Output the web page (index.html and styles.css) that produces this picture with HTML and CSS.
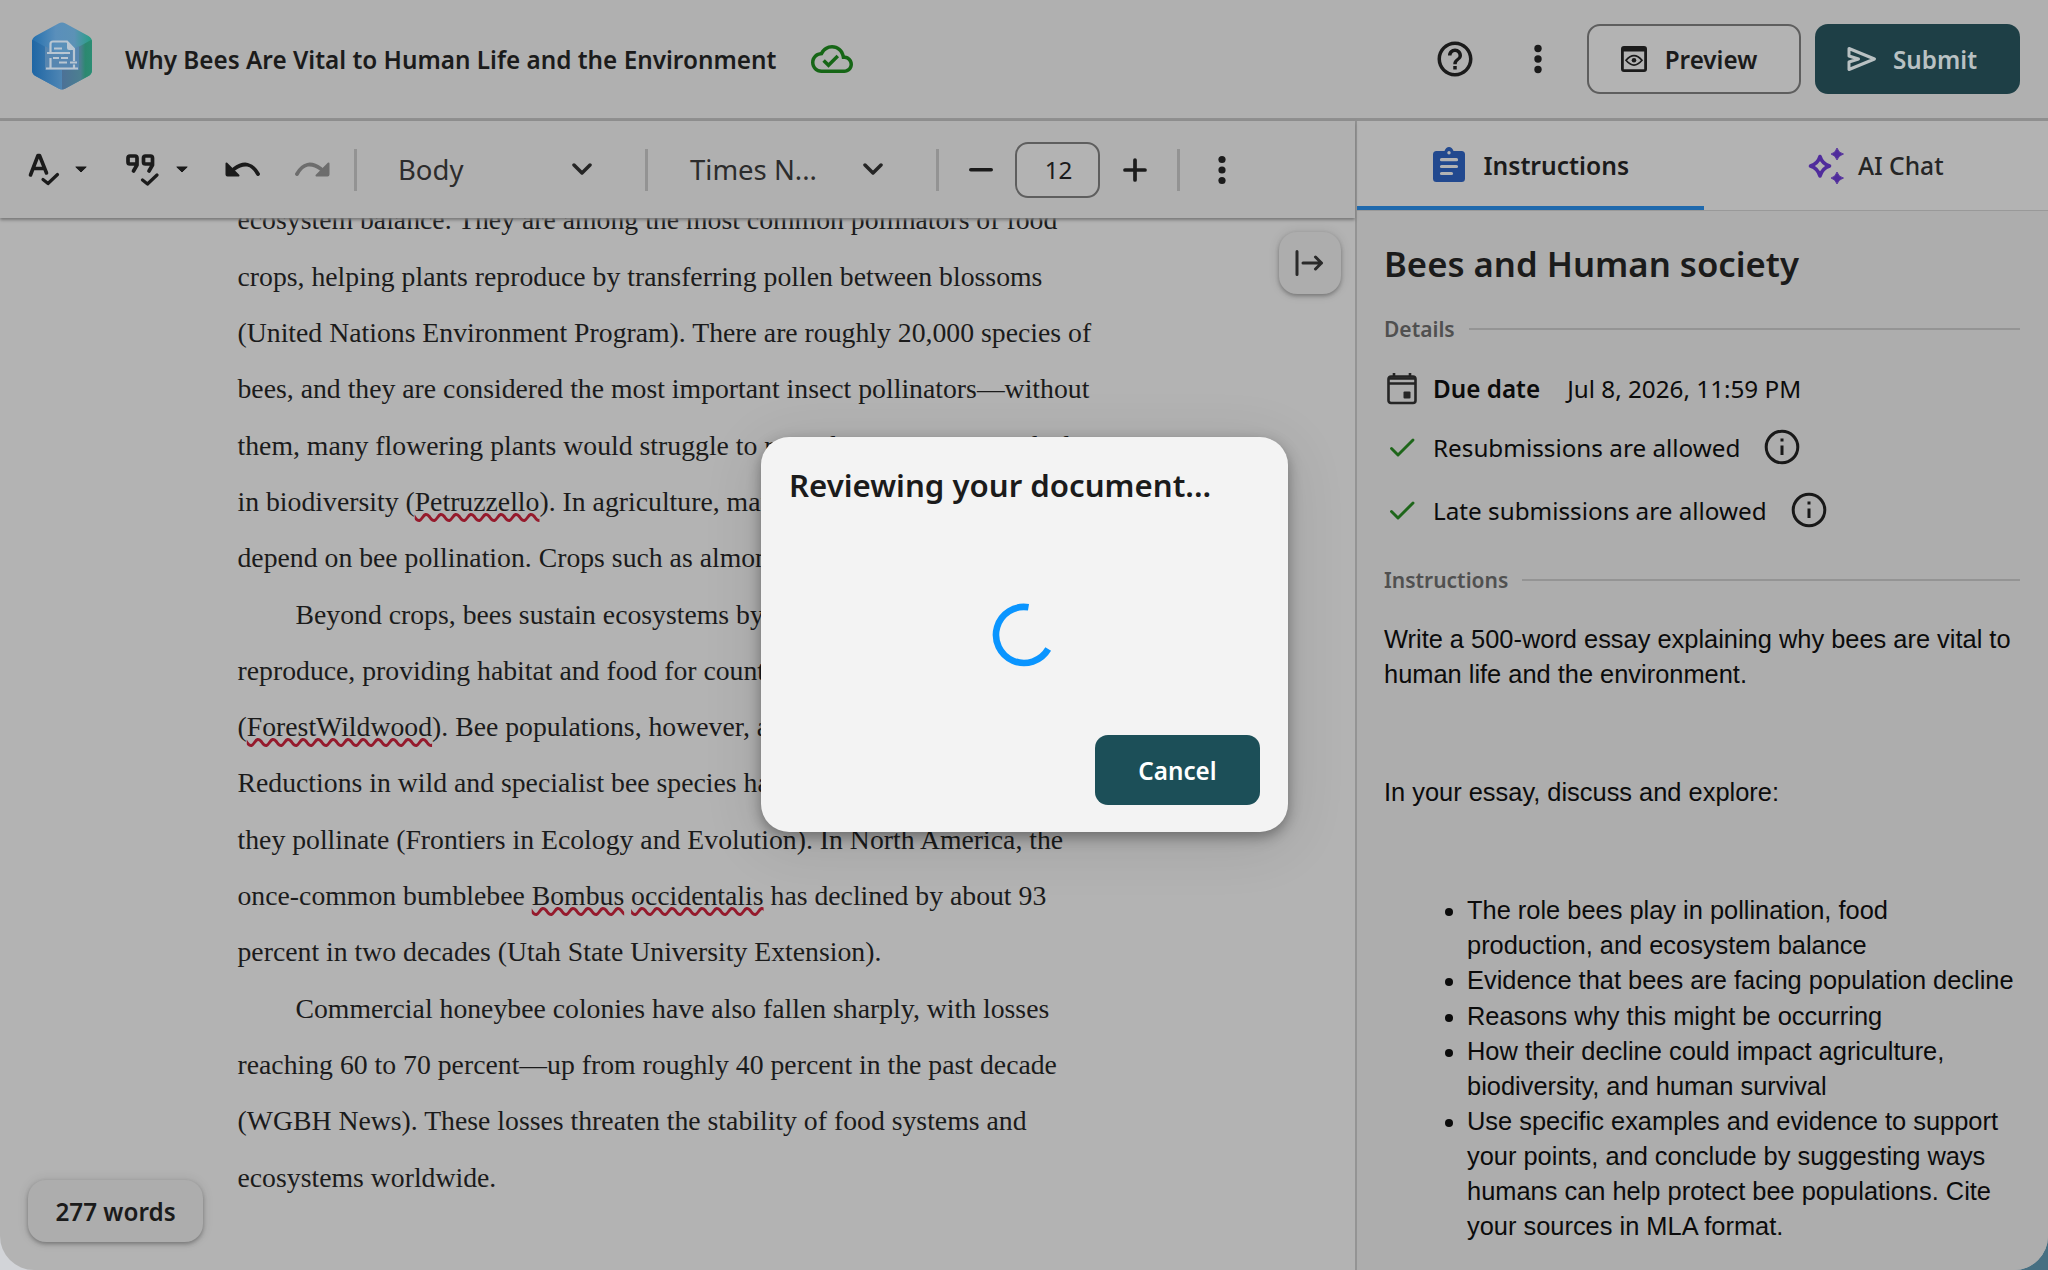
FILE: index.html
```html
<!DOCTYPE html>
<html lang="en">
<head>
<meta charset="utf-8">
<title>Why Bees Are Vital to Human Life and the Environment</title>
<link rel="stylesheet" href="styles.css">
</head>
<body>
<div class="app">
  <header class="header">
    <svg class="logo" width="62" height="68" viewBox="0 0 62 68">
      <defs>
        <clipPath id="hex"><path d="M27.500 1.500Q31 -.5 34.500 1.500L57.500 14Q61 16 61 20V48Q61 52 57.500 54L34.500 66.500Q31 68.500 27.500 66.500L4.500 54Q1 52 1 48V20Q1 16 4.500 14Z"/></clipPath>
        <linearGradient id="lg-left" x1="0" x2="1"><stop offset="0" stop-color="#1d65a4"/><stop offset="1" stop-color="#4f86b4"/></linearGradient>
        <linearGradient id="lg-top" x1="0" x2="1"><stop offset="0" stop-color="#226fae"/><stop offset=".4" stop-color="#5a8fbb"/><stop offset=".7" stop-color="#5c92b6"/><stop offset="1" stop-color="#22a080"/></linearGradient>
        <linearGradient id="lg-right" x1="0" x2="1"><stop offset="0" stop-color="#4c7197"/><stop offset=".6" stop-color="#4c7f90"/><stop offset=".75" stop-color="#2c8870"/><stop offset="1" stop-color="#2b8d74"/></linearGradient>
      </defs>
      <g clip-path="url(#hex)">
        <rect width="62" height="68" fill="url(#lg-top)"/>
        <path d="M0 17L31 34V68H0Z" fill="url(#lg-left)"/>
        <path d="M62 17L31 34V68H62Z" fill="url(#lg-right)"/>
        <path d="M14 24L31 34L48 24V48H14Z" fill="#5786b0"/>
      </g>
      <g fill="none" stroke="#b9c6d2" stroke-width="2.200">
        <path d="M19.500 30V22Q19.500 19.500 22 19.500H36L43 27V39M19.500 36V46M43 42.500V46"/>
        <path d="M15 46.500H47M16 31H39M28 40.500H36M39 40.500H46M23 26.500H31M22 36H28M30 36H37M32 31H37"/>
      </g>
      <path d="M36 19L43.500 28H38Q36 28 36 26Z" fill="#b9c6d2"/>
    </svg>
    <h1 class="doc-title">Why Bees Are Vital to Human Life and the Environment</h1>
    <svg class="cloud" width="42" height="42" viewBox="0 0 24 24" fill="#166616"><path d="M19.350 10.040C18.670 6.590 15.640 4 12 4 9.110 4 6.600 5.640 5.350 8.040 2.340 8.360 0 10.910 0 14c0 3.310 2.690 6 6 6h13c2.760 0 5-2.240 5-5 0-2.640-2.050-4.780-4.650-4.960zM19 18H6c-2.210 0-4-1.790-4-4 0-2.050 1.530-3.760 3.560-3.970l1.070-.11.5-.95C8.080 7.140 9.940 6 12 6c2.620 0 4.880 1.860 5.390 4.430l.3 1.500 1.530.11c1.560.1 2.780 1.410 2.780 2.960 0 1.650-1.350 3-3 3zm-9-3.820-2.090-2.090L6.500 13.500 10 17l6.010-6.010-1.410-1.410z"/></svg>
    <div class="header-actions">
      <svg class="icon help" width="42" height="42" viewBox="0 0 24 24"><path d="M11 18h2v-2h-2v2zm1-16C6.480 2 2 6.480 2 12s4.480 10 10 10 10-4.480 10-10S17.520 2 12 2zm0 18c-4.410 0-8-3.590-8-8s3.590-8 8-8 8 3.590 8 8-3.590 8-8 8zm0-14c-2.210 0-4 1.790-4 4h2c0-1.100.9-2 2-2s2 .9 2 2c0 2-3 1.750-3 5h2c0-2.250 3-2.500 3-5 0-2.210-1.790-4-4-4z"/></svg>
      <svg class="icon more" width="10" height="30" viewBox="0 0 10 30"><circle cx="5" cy="4.500" r="3.700"/><circle cx="5" cy="15" r="3.700"/><circle cx="5" cy="25.500" r="3.700"/></svg>
      <button class="btn btn-outline"><svg width="26" height="26" viewBox="0 0 26 26"><path d="M3 0H23Q26 0 26 3V23Q26 26 23 26H3Q0 26 0 23V3Q0 0 3 0ZM2.800 5.500V23.200H23.200V5.500Z" fill="#1b1b1b" fill-rule="evenodd"/><path d="M5 14.300Q13 4.800 21 14.300Q13 23.800 5 14.300Z" fill="none" stroke="#1b1b1b" stroke-width="1.700"/><circle cx="13" cy="14.300" r="2.300" fill="#1b1b1b"/></svg><span>Preview</span></button>
      <button class="btn btn-dark"><svg width="30" height="26" viewBox="0 0 30 26" fill="none" stroke="#b9c1c3" stroke-width="3" stroke-linejoin="round"><path d="M2 2.500L27.500 13L2 23.500V16L11.500 13L2 10Z"/></svg><span>Submit</span></button>
    </div>
  </header>
  <div class="body">
    <main class="main">
      <div class="toolbar">
        <svg class="icon spell" width="32" height="34" viewBox="0 0 32 34" fill="none" stroke="#1b1b1b" stroke-width="3.600" stroke-linecap="round" stroke-linejoin="round"><path d="M2.500 22L10 2.500H11.500L18.500 20M5.500 15.500H15.500"/><path d="M15 26.500L20 30.500L29.500 21.500" stroke-width="3.200"/></svg>
        <svg class="caret" width="12" height="7" viewBox="0 0 12 7"><path d="M.8 1H11.200L6 6Z" fill="#1b1b1b" stroke="#1b1b1b" stroke-linejoin="round"/></svg>
        <svg class="icon quote" width="34" height="34" viewBox="0 0 34 34" fill="none" stroke="#1b1b1b" stroke-width="3.700" stroke-linecap="round" stroke-linejoin="round"><path d="M12 11H5Q3 11 3 9V5Q3 3 5 3H10Q12 3 12 5V12L8.500 18M27.500 11H20.500Q18.500 11 18.500 9V5Q18.500 3 20.500 3H25.500Q27.500 3 27.500 5V12L24 18"/><path d="M17.500 27L22.500 31L32 22" stroke-width="3.200"/></svg>
        <svg class="caret caret-two" width="12" height="7" viewBox="0 0 12 7"><path d="M.8 1H11.200L6 6Z" fill="#1b1b1b" stroke="#1b1b1b" stroke-linejoin="round"/></svg>
        <svg class="undo" width="36" height="16" viewBox="0 0 36 16"><path d="M9 7Q24-4 33 12" fill="none" stroke="#1b1b1b" stroke-width="3.800" stroke-linecap="round"/><path d="M1.500 1.500L13.500 13.500H2.500Q1.500 13.500 1.500 12.500Z" fill="#1b1b1b" stroke="#1b1b1b" stroke-width="2" stroke-linejoin="round"/></svg>
        <svg class="redo" width="36" height="16" viewBox="0 0 36 16"><path d="M27 7Q12-4 3 12" fill="none" stroke="#6d6d6d" stroke-width="3.800" stroke-linecap="round"/><path d="M34.500 1.500L22.500 13.500H33.500Q34.500 13.500 34.500 12.500Z" fill="#6d6d6d" stroke="#6d6d6d" stroke-width="2" stroke-linejoin="round"/></svg>
        <i class="divider d1"></i>
        <div class="select style-select"><span>Body</span><svg width="20" height="13" viewBox="0 0 20 13"><path d="M2 2L10 10L18 2"/></svg></div>
        <i class="divider"></i>
        <div class="select font-select"><span>Times N...</span><svg width="20" height="13" viewBox="0 0 20 13"><path d="M2 2L10 10L18 2"/></svg></div>
        <i class="divider"></i>
        <svg class="minus" width="24" height="4" viewBox="0 0 24 4"><rect width="24" height="3.600" rx="1.800" fill="#1b1b1b"/></svg>
        <div class="size-box">12</div>
        <svg class="plus" width="24" height="24" viewBox="0 0 24 24"><path d="M12 2V22M2 12H22" stroke="#1b1b1b" stroke-width="3.700" stroke-linecap="round"/></svg>
        <i class="divider d4"></i>
        <svg class="icon more-two" width="10" height="30" viewBox="0 0 10 30"><circle cx="5" cy="4.500" r="3.600"/><circle cx="5" cy="15" r="3.600"/><circle cx="5" cy="25.500" r="3.600"/></svg>
      </div>
      <div class="editor">
        <article class="document">
          <p>ecosystem balance. They are among the most common pollinators of food<br>crops, helping plants reproduce by transferring pollen between blossoms<br>(United Nations Environment Program). There are roughly 20,000 species of<br>bees, and they are considered the most important insect pollinators—without<br>them, many flowering plants would struggle to reproduce, triggering a decline<br>in biodiversity (<span class="misspelt">Petruzzello</span>). In agriculture, many<br>depend on bee pollination. Crops such as almonds</p>
          <p class="indent">Beyond crops, bees sustain ecosystems by<br>reproduce, providing habitat and food for countless<br>(<span class="misspelt">ForestWildwood</span>). Bee populations, however, are<br>Reductions in wild and specialist bee species have<br>they pollinate (Frontiers in Ecology and Evolution). In North America, the<br>once-common bumblebee <span class="misspelt">Bombus</span> <span class="misspelt">occidentalis</span> has declined by about 93<br>percent in two decades (Utah State University Extension).</p>
          <p class="indent">Commercial honeybee colonies have also fallen sharply, with losses<br>reaching 60 to 70 percent—up from roughly 40 percent in the past decade<br>(WGBH News). These losses threaten the stability of food systems and<br>ecosystems worldwide.</p>
        </article>
        <button class="collapse"><svg width="30" height="28" viewBox="0 0 30 28" fill="none" stroke="#2a2a2a" stroke-width="3" stroke-linecap="round" stroke-linejoin="round"><path d="M3 2.500V25.500M9 14H27.500M21.500 8L27.500 14L21.500 20"/></svg></button>
        <div class="word-count">277 words</div>
      </div>
    </main>
    <aside class="sidebar">
      <nav class="tabs">
        <div class="tab active"><svg width="32" height="35" viewBox="0 0 32 35"><path d="M3.500 4H11.500Q13 0 16 0Q19 0 20.500 4H28.500Q32 4 32 7.500V31.500Q32 35 28.500 35H3.500Q0 35 0 31.500V7.500Q0 4 3.500 4Z" fill="#22498f"/><circle cx="16" cy="5.800" r="1.700" fill="#b3b3b3"/><path d="M8.500 12.700H23.500M8.500 19.500H23.500M8.500 26.500H18.500" stroke="#b3b3b3" stroke-width="3.200" stroke-linecap="round"/></svg><span>Instructions</span></div>
        <div class="tab"><svg width="36" height="36" viewBox="0 0 36 36"><path d="M12 8.500Q14 15.500 21.500 18Q14 20.500 12 28Q10 20.500 2.500 18Q10 15.500 12 8.500Z" fill="none" stroke="#502c9c" stroke-width="3.600" stroke-linejoin="round"/><path d="M29 0Q30.500 5 35.500 6Q30.500 7.500 29 12Q27.500 7.500 23 6Q27.500 5 29 0ZM29 24Q30.500 29 35.500 30Q30.500 31.500 29 36Q27.500 31.500 23 30Q27.500 29 29 24Z" fill="#502c9c" stroke="#502c9c" stroke-width=".8"/></svg><span>AI Chat</span></div>
      </nav>
      <section class="panel">
        <h2>Bees and Human society</h2>
        <div class="section-label">Details</div>
        <div class="detail due"><svg width="30" height="33" viewBox="0 0 30 33" fill="none" stroke="#252525" stroke-width="2.600"><rect x="1.500" y="4.500" width="27" height="26.500" rx="2.500"/><path d="M2 11.500H28M2 6.500H28M7 1V5M23 1V5"/><rect x="16.500" y="19.500" width="7" height="7" rx="1" fill="#252525" stroke="none"/></svg><b>Due date</b><span>Jul 8, 2026, 11:59 PM</span></div>
        <div class="detail resub"><svg class="check" width="30" height="22" viewBox="0 0 30 22"><path d="M4.500 12.500L11 19L26 4"/></svg><span>Resubmissions are allowed</span><svg class="info" width="36" height="36" viewBox="0 0 36 36"><circle cx="18" cy="18" r="15.800"/><path d="M18 16.500V26M18 9.500V12.500"/></svg></div>
        <div class="detail late"><svg class="check" width="30" height="22" viewBox="0 0 30 22"><path d="M4.500 12.500L11 19L26 4"/></svg><span>Late submissions are allowed</span><svg class="info" width="36" height="36" viewBox="0 0 36 36"><circle cx="18" cy="18" r="15.800"/><path d="M18 16.500V26M18 9.500V12.500"/></svg></div>
        <div class="section-label">Instructions</div>
        <div class="brief">
          <p>Write a 500-word essay explaining why bees are vital to<br>human life and the environment.</p>
          <p class="discuss">In your essay, discuss and explore:</p>
          <ul>
            <li>The role bees play in pollination, food<br>production, and ecosystem balance</li>
            <li>Evidence that bees are facing population decline</li>
            <li>Reasons why this might be occurring</li>
            <li>How their decline could impact agriculture,<br>biodiversity, and human survival</li>
            <li>Use specific examples and evidence to support<br>your points, and conclude by suggesting ways<br>humans can help protect bee populations. Cite<br>your sources in MLA format.</li>
          </ul>
        </div>
      </section>
    </aside>
  </div>
</div>
<div class="dialog" role="dialog">
  <h2>Reviewing your document...</h2>
  <div class="spinner-wrap"><svg width="64" height="64" viewBox="0 0 64 64"><path d="M36.500 4.300A28 28 0 1 0 56.200 46" fill="none" stroke="#0a95ff" stroke-width="6.600"/></svg></div>
  <button class="btn cancel">Cancel</button>
</div>
</body>
</html>
```

FILE: styles.css
```css
* { box-sizing: border-box; }
body { margin: 0; width: 2048px; height: 1270px; overflow: hidden; position: relative; font-family: "Noto Sans", "Open Sans", sans-serif; font-size: 24.25px; color: #1b1b1b; background: linear-gradient(90deg, #d2d4d8 50%, #466f82 50%); }
h1, h2, p, ul { margin: 0; }
svg { display: block; flex: none; }
button { font: inherit; color: inherit; border: 0; padding: 0; }
.app { height: 1270px; display: flex; flex-direction: column; overflow: hidden; background: #b3b3b3; border-radius: 0 0 34px 34px; }

.header { height: 121px; flex: none; display: flex; align-items: center; padding: 0 28px 0 31px; background: #b0b0b0; border-bottom: 3px solid #8f8f8f; }
.logo { margin: -7px 32px 0 0; }
.doc-title { font-size: 24.3px; font-weight: 600; line-height: 32px; padding-top: 1px; white-space: nowrap; }
.cloud { margin-left: 35px; }
.header-actions { margin-left: auto; display: flex; align-items: center; }
.icon { fill: #1b1b1b; }
.help { margin-right: 57px; }
.more { margin-right: 44px; }
.btn { height: 70px; border-radius: 13px; display: flex; align-items: center; justify-content: center; font-weight: 600; }
.btn-outline { width: 214px; background: #b3b3b3; border: 2px solid #5e5e5e; gap: 18px; margin-right: 14px; padding: 0 10px 0 0; }
.btn-dark { width: 205px; background: #1e3f46; color: #b9c1c3; gap: 16px; padding: 0 11px 0 0; }

.body { flex: 1; display: flex; min-height: 0; }
.main { width: 1355px; flex: none; display: flex; flex-direction: column; }
.toolbar { height: 97px; flex: none; display: flex; align-items: center; padding-left: 28px; background: #b0b0b0; box-shadow: 0 2px 3px #777; z-index: 1; }
.spell, .quote { fill: none; }
.caret { margin-left: 15px; }
.quote { margin-left: 38px; }
.caret-two { margin-left: 17px; }
.undo { margin-left: 37px; }
.redo { margin-left: 33px; }
.divider { width: 3px; height: 42px; background: #939393; flex: none; }
.d1 { margin-left: 24px; }
.select { height: 44px; display: flex; align-items: center; justify-content: space-between; font-size: 27.5px; color: #2c2c2c; white-space: nowrap; }
.select svg { fill: none; stroke: #252525; stroke-width: 3.500; stroke-linecap: round; stroke-linejoin: round; }
.style-select { width: 288px; padding: 0 53px 0 41px; }
.font-select { width: 288px; padding: 0 53px 0 42px; }
.minus { margin-left: 30px; }
.size-box { width: 85px; height: 56px; margin: 0 23px 0 22px; border: 2px solid #5e5e5e; border-radius: 13px; background: #b3b3b3; display: flex; align-items: center; justify-content: center; padding-left: 2px; }
.d4 { margin-left: 30px; }
.more-two { margin-left: 37px; }

.editor { flex: 1; min-height: 0; position: relative; overflow: hidden; }
.document { padding-left: 237.500px; margin-top: -25.700px; font: 27.740px/56.320px "Liberation Serif", "Times New Roman", serif; white-space: nowrap; }
.indent { text-indent: 58px; }
.misspelt { text-decoration: underline wavy #951a2c 2.700px; text-underline-offset: 2px; text-decoration-skip-ink: none; }
.collapse { position: absolute; right: 14px; top: 14px; width: 62px; height: 62px; border-radius: 18px; background: #adadad; display: flex; align-items: center; justify-content: center; padding-right: 2px; box-shadow: 0 2px 4px rgba(0,0,0,.3), 0 0 12px rgba(0,0,0,.1); }
.word-count { position: absolute; left: 28px; bottom: 28px; width: 175px; height: 62px; border-radius: 18px; background: #adadad; display: flex; align-items: center; justify-content: center; font-weight: 600; box-shadow: 0 2px 4px rgba(0,0,0,.3), 0 0 12px rgba(0,0,0,.1); }

.sidebar { flex: 1; border-left: 2px solid #949494; background: #adadad; }
.tabs { height: 90px; display: flex; background: #b3b3b3; border-bottom: 1px solid #999; }
.tab { flex: 1; display: flex; align-items: center; justify-content: center; font-size: 24.6px; font-weight: 500; gap: 14px; color: #252525; }
.tab.active { gap: 18px; font-weight: 600; color: #1b1b1b; padding: 3px 0 0 2px; border-bottom: 4px solid #1f69ad; }
.tab.active svg { margin-top: -2px; }
.panel { padding: 29px 28px 0 27px; }
.panel h2 { font-size: 34.700px; font-weight: 600; line-height: 48px; }
.section-label { display: flex; align-items: center; gap: 14px; margin-top: 25px; height: 32px; font-size: 21px; font-weight: 600; color: #505050; }
.section-label::after { content: ""; flex: 1; height: 2px; background: #949494; }
.detail { display: flex; align-items: center; color: #0b0b0b; white-space: nowrap; height: 36px; }
.detail > svg:first-child { margin: 0 16px 0 3px; }
.due { margin-top: 25px; }
.due b { font-weight: 600; margin-right: 27px; }
.resub { margin-top: 23px; }
.late { margin-top: 27px; }
.late + .section-label { margin-top: 36px; }
.check { fill: none; stroke: #1e661a; stroke-width: 2.900; stroke-linecap: round; stroke-linejoin: round; }
.info { margin-left: 24px; fill: none; stroke: #181818; stroke-width: 3; }
.brief { margin-top: 26px; font: 25.420px/35.100px "Liberation Sans", Arial, sans-serif; color: #0b0b0b; white-space: nowrap; }
.discuss { margin-top: 83px; }
.brief ul { margin-top: 83px; padding-left: 83px; }

.dialog { position: absolute; left: 761px; top: 437px; width: 527px; height: 395px; border-radius: 28px; background: #f3f3f3; padding: 24px 28px 27px; display: flex; flex-direction: column; box-shadow: 0 5px 14px rgba(0,0,0,.35), 0 10px 60px rgba(0,0,0,.12); }
.dialog h2 { font-size: 31.200px; font-weight: 600; line-height: 48px; white-space: nowrap; }
.spinner-wrap { flex: 1; display: flex; align-items: center; justify-content: center; padding: 25px 2px 0 0; }
.cancel { width: 165px; align-self: flex-end; flex: none; background: #1c4f58; color: #fff; }
```
